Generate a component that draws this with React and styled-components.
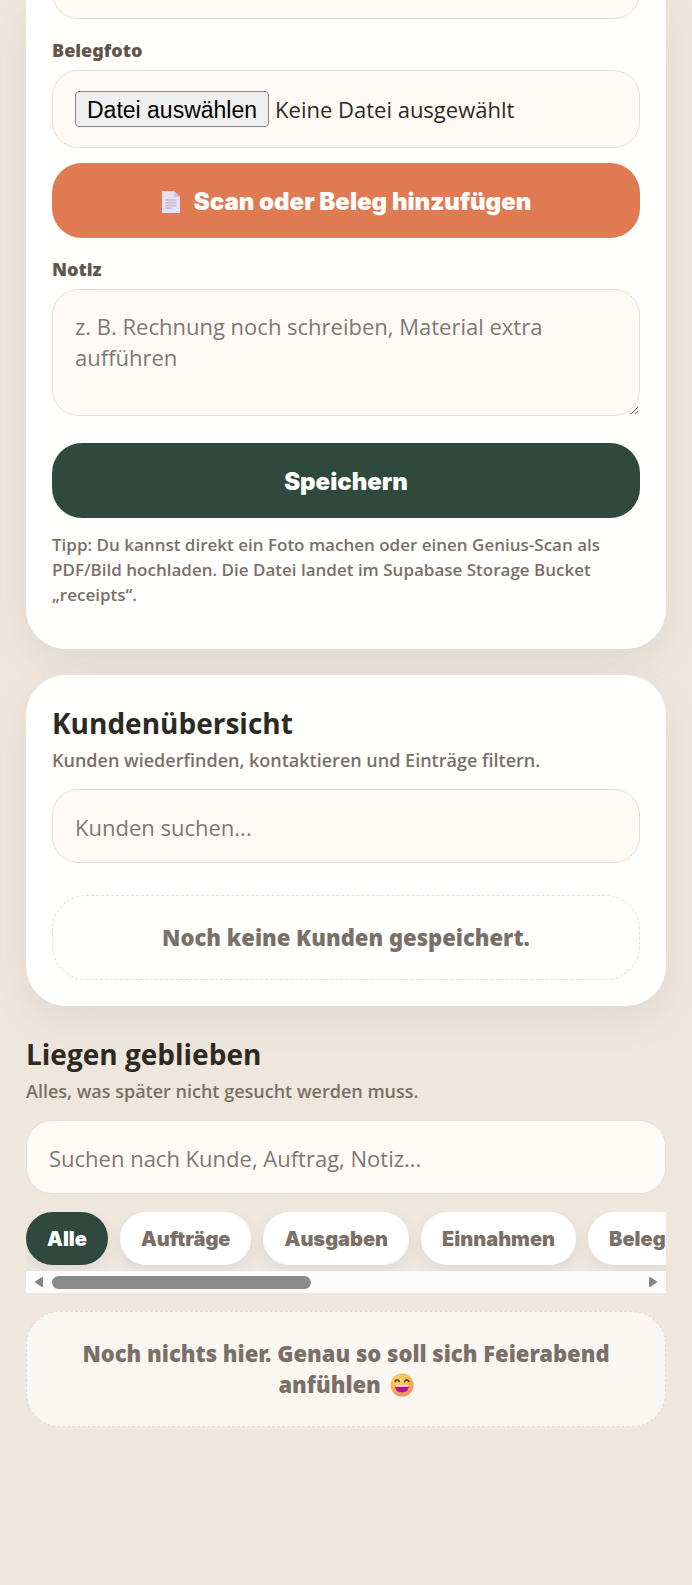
import React, { useRef, useState } from "react";
import styled, { createGlobalStyle } from "styled-components";

const GlobalStyle = createGlobalStyle`
  * {
    box-sizing: border-box;
  }

  body {
    margin: 0;
    min-height: 100vh;
    background: #efe7de;
    color: #2d2923;
    font-family: "Open Sans", "Noto Sans", sans-serif;
  }
`;

//layout

const Page = styled.main`
  padding: 0 26px 120px;
`;

const Card = styled.section`
  padding: ${({ $open }) => ($open ? "0 26px 42px" : "26px")};
  margin-bottom: 26px;
  border-radius: ${({ $open }) => ($open ? "0 0 40px 40px" : "40px")};
  background: #fffffe;
  box-shadow: 0 14px 40px rgba(86, 62, 50, 0.09);
`;

const ScrolledField = styled.div`
  display: flex;
  align-items: flex-end;
  height: 19px;
  overflow: hidden;
`;

const Title = styled.h2`
  margin: 0 0 2px;
  font-size: 28px;
  font-weight: 700;
  line-height: 44px;
`;

const Subtitle = styled.p`
  margin: 0 0 16px;
  color: #7b7067;
  font-size: 18px;
  font-weight: 600;
  line-height: 26px;
`;

const Hint = styled.p`
  margin: 14px 0 0;
  color: #7b7067;
  font-size: 17px;
  font-weight: 600;
  line-height: 25px;
`;

//form parts

const Label = styled.label`
  display: block;
  padding: 18px 0 7px;
  color: #62564c;
  font-family: "Noto Sans", sans-serif;
  font-size: 18px;
  font-weight: 900;
  line-height: 26px;
`;

const Input = styled.input`
  display: block;
  flex: none;
  width: 100%;
  height: 74px;
  padding: 2px 22px 0;
  border: 1px solid #e8ded4;
  border-radius: 26px;
  background: #fffaf5;
  color: #2d2923;
  font-family: inherit;
  font-size: 22px;

  &::placeholder {
    color: #7b7977;
  }
`;

const TextArea = styled(Input)`
  height: 127px;
  padding: 21px 22px;
  line-height: 31px;
  resize: vertical;
`;

const FileBox = styled.div`
  display: flex;
  align-items: center;
  gap: 6px;
  height: 78px;
  padding: 0 22px;
  border: 1px solid #e8ded4;
  border-radius: 26px;
  background: #fffaf5;
  font-size: 22px;
`;

const HiddenFile = styled.input`
  display: none;
`;

const FileButton = styled.button`
  height: 36px;
  padding: 1px 11px 0;
  border: 1px solid #858585;
  border-radius: 4px;
  background: #efefef;
  color: #000000;
  font-family: "Liberation Sans", Arial, sans-serif;
  font-size: 23px;
  line-height: 32px;
  cursor: pointer;
`;

const Button = styled.button`
  display: flex;
  align-items: center;
  justify-content: center;
  gap: 13px;
  width: 100%;
  height: 75px;
  padding: 2px 0 0;
  margin-top: ${({ $spaced }) => ($spaced ? "27px" : "15px")};
  border: none;
  border-radius: 30px;
  background: ${({ $accent }) => ($accent ? "#df7a52" : "#30493e")};
  color: #ffffff;
  font-family: Inter, sans-serif;
  font-size: 24px;
  font-weight: 900;
  cursor: pointer;
`;

const Empty = styled.div`
  padding: 26px;
  margin-top: ${({ $filled }) => ($filled ? "18px" : "32px")};
  border: 1px dashed #e5dbd2;
  border-radius: 34px;
  background: ${({ $filled }) => ($filled ? "#faf6f2" : "transparent")};
  color: #7b7067;
  font-family: "Noto Sans", sans-serif;
  font-size: 22px;
  font-weight: 900;
  line-height: 31px;
  text-align: center;

  svg {
    margin-left: 3px;
    vertical-align: -4px;
  }
`;

//filter chips

const Chips = styled.div`
  display: flex;
  gap: 12px;
  margin-top: 18px;
  padding-bottom: 6px;
  overflow-x: auto;
  scrollbar-width: none;
`;

const Chip = styled.button`
  flex: none;
  height: 53px;
  padding: 0 21px;
  border: none;
  border-radius: 27px;
  background: ${({ $active }) => ($active ? "#30493e" : "#ffffff")};
  color: ${({ $active }) => ($active ? "#ffffff" : "#7b7067")};
  box-shadow: 0 6px 16px rgba(86, 62, 50, 0.08);
  font-family: Inter, sans-serif;
  font-size: 20px;
  font-weight: 900;
  cursor: pointer;
`;

const ScrollBar = styled.div`
  display: flex;
  align-items: center;
  height: 22px;
  background: #fcfcfc;
`;

const ArrowButton = styled.button`
  display: flex;
  align-items: center;
  justify-content: center;
  width: 26px;
  height: 22px;
  padding: 0;
  border: none;
  background: none;
`;

const Track = styled.div`
  flex: 1;
`;

const Thumb = styled.div`
  width: 44%;
  height: 13px;
  border-radius: 7px;
  background: #8a8a8a;
`;

const PageIcon = () => (
  <svg width="20" height="24" viewBox="0 0 20 24" aria-hidden="true">
    <path d="M1 1h12l6 6v16H1z" fill="#eadff0" />
    <path d="M13 1l6 6h-6z" fill="#d3c3e0" />
    <path d="M4.500 10h11M4.500 12.700h11M4.500 15.400h11M4.500 18h7" stroke="#c3b7d0" strokeWidth="1.500" />
  </svg>
);

const LaughIcon = () => (
  <svg width="24" height="24" viewBox="0 0 24 24" role="img" aria-label="lachend">
    <defs>
      <radialGradient id="laugh" cx="0.4" cy="0.3" r="0.75">
        <stop offset="0" stopColor="#ffd766" />
        <stop offset="0.6" stopColor="#f9b653" />
        <stop offset="1" stopColor="#f0806a" />
      </radialGradient>
    </defs>
    <circle cx="12" cy="12" r="11.5" fill="url(#laugh)" />
    <path
      d="M5 8.6q2.2-3.4 4.4 0M14.6 8.6q2.200-3.400 4.400 0"
      fill="none"
      stroke="#5a3d1c"
      strokeWidth="1.6"
      strokeLinecap="round"
    />
    <path d="M4.800 12h14.400q-.4 7.500-7.200 7.500t-7.200-7.500z" fill="#b8128a" />
    <path d="M5 12h14l-.4 1.800H5.400z" fill="#f7e6f0" />
  </svg>
);

const Arrow = ({ left }) => (
  <svg width="10" height="12" viewBox="0 0 10 12" aria-hidden="true">
    <path
      d={left ? "M8 2v8L2 6z" : "M2 2v8l6-4z"}
      fill="#858585"
      stroke="#858585"
      strokeWidth="2"
      strokeLinejoin="round"
    />
  </svg>
);

const filters = ["Alle", "Aufträge", "Ausgaben", "Einnahmen", "Belege", "Material", "Stunden", "Offen", "Erledigt", "Notizen"];

//component

const App = () => {
  const [active, setActive] = useState("Alle");
  const [fileName, setFileName] = useState("");
  const [progress, setProgress] = useState(0);
  const fileRef = useRef(null);
  const chipsRef = useRef(null);

  const pickFile = () => fileRef.current.click();
  const scrollChips = (by) => chipsRef.current.scrollBy({ left: by, behavior: "smooth" });
  const handleScroll = (e) => {
    const { scrollLeft, scrollWidth, clientWidth } = e.target;
    setProgress(scrollLeft / (scrollWidth - clientWidth));
  };

  return (
    <>
      <GlobalStyle />
      <Page>
        <Card $open>
          <ScrolledField>
            <Input type="text" aria-label="Betrag" />
          </ScrolledField>

          <Label htmlFor="receipt">Belegfoto</Label>
          <FileBox>
            <HiddenFile
              id="receipt"
              type="file"
              ref={fileRef}
              onChange={(e) => setFileName(e.target.files[0]?.name || "")}
            />
            <FileButton type="button" onClick={pickFile}>Datei auswählen</FileButton>
            <span>{fileName || "Keine Datei ausgewählt"}</span>
          </FileBox>
          <Button type="button" $accent onClick={pickFile}>
            <PageIcon />
            Scan oder Beleg hinzufügen
          </Button>

          <Label htmlFor="note">Notiz</Label>
          <TextArea
            as="textarea"
            id="note"
            placeholder="z. B. Rechnung noch schreiben, Material extra aufführen"
          />
          <Button type="submit" $spaced>Speichern</Button>
          <Hint>
            Tipp: Du kannst direkt ein Foto machen oder einen Genius-Scan als
            PDF/Bild hochladen. Die Datei landet im Supabase Storage Bucket
            „receipts“.
          </Hint>
        </Card>

        <Card>
          <Title>Kundenübersicht</Title>
          <Subtitle>Kunden wiederfinden, kontaktieren und Einträge filtern.</Subtitle>
          <Input type="search" aria-label="Kunden suchen" placeholder="Kunden suchen..." />
          <Empty>Noch keine Kunden gespeichert.</Empty>
        </Card>

        <section>
          <Title>Liegen geblieben</Title>
          <Subtitle>Alles, was später nicht gesucht werden muss.</Subtitle>
          <Input type="search" aria-label="Einträge suchen" placeholder="Suchen nach Kunde, Auftrag, Notiz..." />
          <Chips ref={chipsRef} onScroll={handleScroll}>
            {filters.map((name) => (
              <Chip key={name} type="button" $active={name === active} onClick={() => setActive(name)}>
                {name}
              </Chip>
            ))}
          </Chips>
          <ScrollBar>
            <ArrowButton type="button" aria-label="Zurück" onClick={() => scrollChips(-160)}>
              <Arrow left />
            </ArrowButton>
            <Track>
              <Thumb style={{ marginLeft: `${progress * 56}%` }} />
            </Track>
            <ArrowButton type="button" aria-label="Weiter" onClick={() => scrollChips(160)}>
              <Arrow />
            </ArrowButton>
          </ScrollBar>
          <Empty $filled>
            Noch nichts hier. Genau so soll sich Feierabend anfühlen <LaughIcon />
          </Empty>
        </section>
      </Page>
    </>
  );
};

export default App;
